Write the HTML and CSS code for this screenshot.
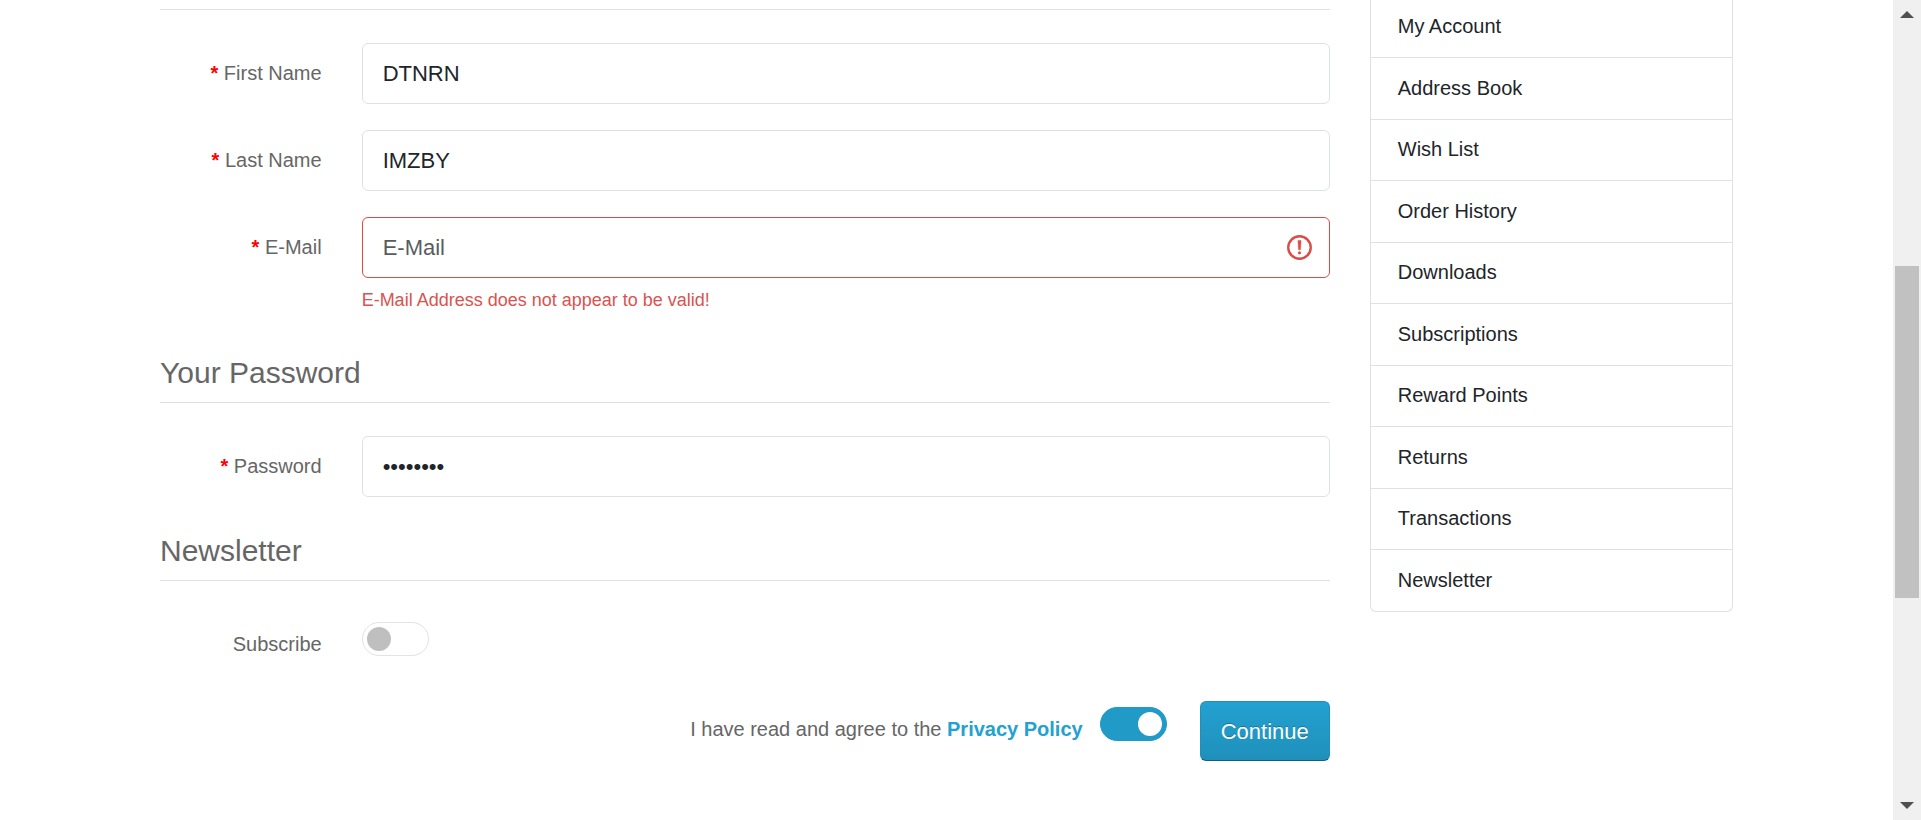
FILE: index.html
```
<!DOCTYPE html>
<html lang="en">
<head>
<meta charset="utf-8">
<title>Register Account</title>
<link rel="stylesheet" href="styles.css">
</head>
<body>
<div class="viewport">
  <div class="page">
    <div class="container">
      <main class="content">
        <form class="form" novalidate>
          <section class="group">
            <hr class="rule">
            <div class="rows">
              <div class="row">
                <label class="label required" for="firstname">First Name</label>
                <div class="field"><input class="input" id="firstname" type="text" value="DTNRN"></div>
              </div>
              <div class="row">
                <label class="label required" for="lastname">Last Name</label>
                <div class="field"><input class="input" id="lastname" type="text" value="IMZBY"></div>
              </div>
              <div class="row">
                <label class="label required" for="email">E-Mail</label>
                <div class="field">
                  <input class="input invalid" id="email" type="email" placeholder="E-Mail" aria-describedby="email-error">
                  <svg class="alert-icon" viewBox="0 0 24 24" aria-hidden="true">
                    <circle cx="12" cy="12" r="10.8" fill="none" stroke="#dc4c45" stroke-width="2.3"/>
                    <path d="M10.5 5.2h3l-.5 8.9h-2z" fill="#dc4c45" stroke="#dc4c45" stroke-width=".4" stroke-linejoin="round"/>
                    <circle cx="12" cy="17.1" r="1.5" fill="#dc4c45"/>
                  </svg>
                  <p class="error" id="email-error">E-Mail Address does not appear to be valid!</p>
                </div>
              </div>
            </div>
          </section>
          <section class="group">
            <h2 class="heading">Your Password</h2>
            <hr class="rule">
            <div class="rows">
              <div class="row">
                <label class="label required" for="password">Password</label>
                <div class="field"><input class="input" id="password" type="password" value="password"></div>
              </div>
            </div>
          </section>
          <section class="group">
            <h2 class="heading">Newsletter</h2>
            <hr class="rule">
            <div class="rows">
              <div class="row row-switch">
                <label class="label" for="newsletter">Subscribe</label>
                <div class="field"><input class="switch" id="newsletter" type="checkbox" role="switch"></div>
              </div>
            </div>
          </section>
          <div class="actions">
            <label class="agree" for="agree">I have read and agree to the <a class="policy" href="#privacy">Privacy Policy</a></label>
            <input class="switch" id="agree" type="checkbox" role="switch" checked>
            <button class="button" type="submit">Continue</button>
          </div>
        </form>
      </main>
      <nav class="sidebar" aria-label="Account">
        <a class="item" href="#account">My Account</a>
        <a class="item" href="#address">Address Book</a>
        <a class="item" href="#wishlist">Wish List</a>
        <a class="item" href="#orders">Order History</a>
        <a class="item" href="#downloads">Downloads</a>
        <a class="item" href="#subscriptions">Subscriptions</a>
        <a class="item" href="#rewards">Reward Points</a>
        <a class="item" href="#returns">Returns</a>
        <a class="item" href="#transactions">Transactions</a>
        <a class="item" href="#newsletter">Newsletter</a>
      </nav>
    </div>
  </div>
  <div class="scrollbar" aria-hidden="true">
    <svg class="arrow" viewBox="0 0 28 28"><path d="M7 18L14 11L21 18z" fill="#505050"/></svg>
    <div class="track-above"></div>
    <div class="thumb"></div>
    <div class="track-below"></div>
    <svg class="arrow" viewBox="0 0 28 28"><path d="M7 10L14 17L21 10z" fill="#505050"/></svg>
  </div>
</div>
</body>
</html>
```
FILE: styles.css
```
* {
  box-sizing: border-box;
}

body {
  margin: 0;
  background: #fff;
  color: #666;
  font: 20px/30px "Liberation Sans", Arial, sans-serif;
}

.viewport {
  display: flex;
  height: 100vh;
  overflow: hidden;
}

.page {
  flex: 1;
  min-width: 0;
}

.container {
  display: grid;
  grid-template-columns: repeat(12, minmax(0, 1fr));
  column-gap: 40px;
  align-items: start;
  max-width: 1613px;
  margin: 0 auto;
  padding: 0 20px;
}

.content {
  grid-column: span 9;
  padding-top: 9px;
}

.rule {
  margin: 0 0 33px;
  border: 0;
  border-top: 1px solid #e0e0e1;
}

.rows {
  display: grid;
  row-gap: 26px;
}

.row {
  display: grid;
  grid-template-columns: repeat(12, minmax(0, 1fr));
  column-gap: 40px;
  align-items: start;
}

.label {
  grid-column: span 2;
  padding-top: 15px;
  text-align: right;
}

.required::before {
  content: "* ";
  color: #f00;
  font-weight: bold;
}

.field {
  grid-column: span 10;
  position: relative;
}

.input {
  display: block;
  width: 100%;
  height: 61px;
  padding: 0 20px;
  border: 1px solid #dee2e6;
  border-radius: 6px;
  background: #fff;
  color: #212529;
  font: inherit;
  font-size: 22px;
}

.input::placeholder {
  color: #595c5f;
  opacity: 1;
}

.invalid {
  padding-right: 60px;
  border-color: #dc4c45;
}

.alert-icon {
  position: absolute;
  top: 18px;
  right: 18px;
  width: 25px;
  height: 25px;
}

.error {
  margin: 7px 0 4px;
  color: #d9534f;
  font-size: 18px;
}

.heading {
  margin: 0 0 11px;
  padding-top: 36px;
  color: #666;
  font-size: 30px;
  font-weight: 400;
  line-height: 36px;
}

.row-switch {
  padding-top: 8px;
}

.row-switch .label {
  padding-top: 7px;
}

.switch {
  appearance: none;
  display: block;
  flex: none;
  width: 67px;
  height: 34px;
  margin: 0;
  padding: 4px;
  border: 1px solid #e2e2e7;
  border-radius: 17px;
  background: #fff;
}

.switch::before {
  content: "";
  display: block;
  width: 24px;
  height: 24px;
  border-radius: 50%;
  background: #bfbfbf;
}

.switch:checked {
  border-color: #229ac8;
  background: #229ac8;
}

.switch:checked::before {
  margin-left: auto;
  background: #fff;
}

.actions {
  display: flex;
  justify-content: flex-end;
  align-items: flex-start;
  padding-top: 42px;
}

.agree {
  padding-top: 13px;
  margin-right: 17px;
}

.policy {
  color: #23a1d1;
  font-weight: bold;
  text-decoration: none;
}

.actions .switch {
  margin-top: 6px;
}

.button {
  margin-left: 33px;
  padding: 15px 20px 13px;
  border: 1px solid #1f90bb;
  border-bottom-color: #145e7a;
  border-radius: 6px;
  background: linear-gradient(#23a1d1, #1f90bb);
  color: #fff;
  font: inherit;
  font-size: 22px;
  text-shadow: 0 -1px 0 rgba(0, 0, 0, 0.25);
}

.sidebar {
  grid-column: span 3;
  border: 1px solid #dee2e6;
  border-top: 0;
  border-radius: 0 0 6px 6px;
}

.item {
  display: block;
  padding: 14px 27px 16px;
  border-bottom: 1px solid #dee2e6;
  color: #212529;
  text-decoration: none;
}

.item:nth-child(even) {
  padding-top: 15px;
}

.item:first-child {
  padding-top: 11px;
}

.item:last-child {
  border-bottom: 0;
}

.scrollbar {
  display: flex;
  flex-direction: column;
  width: 28px;
  background: #f0f0f0;
}

.arrow {
  flex: none;
  width: 28px;
  height: 28px;
}

.track-above {
  flex: 238;
}

.thumb {
  flex: 332;
  margin: 0 2px;
  background: #c1c1c1;
}

.track-below {
  flex: 194;
}
```
